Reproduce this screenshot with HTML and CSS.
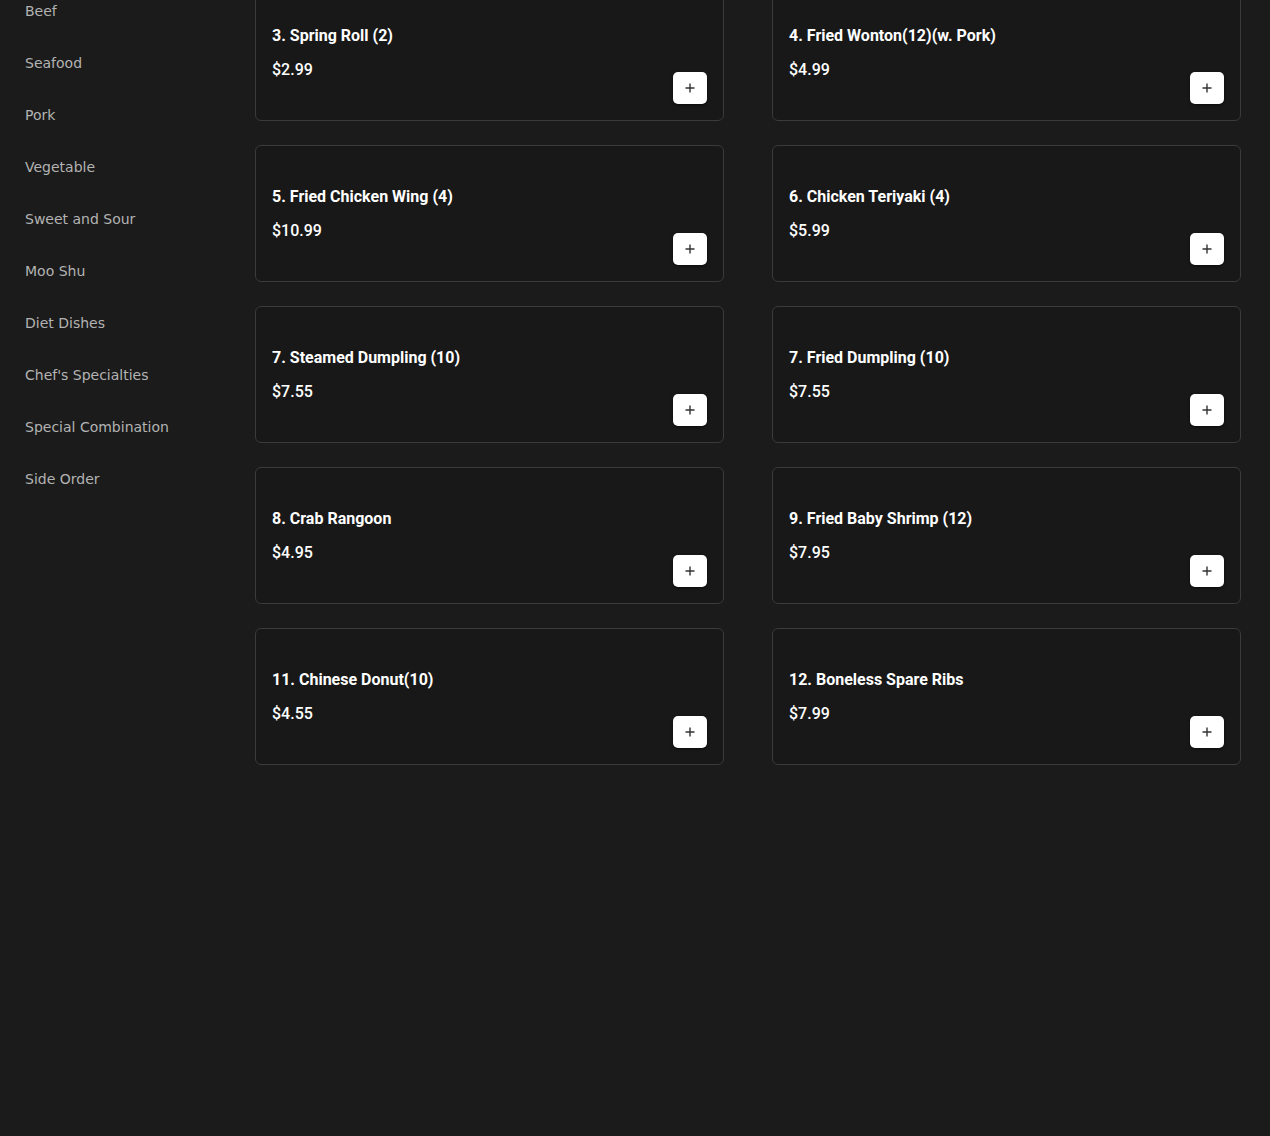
FILE: index.html
```html
<!DOCTYPE html>
<html>
<head>
<meta charset="utf-8">
<link rel="stylesheet" href="styles.css">
</head>
<body>
<div class="page">
  <nav class="sidebar">
    <a class="cat">Beef</a>
    <a class="cat">Seafood</a>
    <a class="cat">Pork</a>
    <a class="cat">Vegetable</a>
    <a class="cat">Sweet and Sour</a>
    <a class="cat">Moo Shu</a>
    <a class="cat">Diet Dishes</a>
    <a class="cat">Chef's Specialties</a>
    <a class="cat">Special Combination</a>
    <a class="cat">Side Order</a>
  </nav>
  <main class="menu">
    <div class="card"><div class="info"><div class="name">3. Spring Roll (2)</div><div class="price">$2.99</div></div><button class="add"><svg viewBox="0 0 10 10" width="10" height="10"><path d="M5 0.5v9M0.5 5h9" stroke="#333" stroke-width="1.4"/></svg></button></div>
    <div class="card"><div class="info"><div class="name">4. Fried Wonton(12)(w. Pork)</div><div class="price">$4.99</div></div><button class="add"><svg viewBox="0 0 10 10" width="10" height="10"><path d="M5 0.5v9M0.5 5h9" stroke="#333" stroke-width="1.4"/></svg></button></div>
    <div class="card"><div class="info"><div class="name">5. Fried Chicken Wing (4)</div><div class="price">$10.99</div></div><button class="add"><svg viewBox="0 0 10 10" width="10" height="10"><path d="M5 0.5v9M0.5 5h9" stroke="#333" stroke-width="1.4"/></svg></button></div>
    <div class="card"><div class="info"><div class="name">6. Chicken Teriyaki (4)</div><div class="price">$5.99</div></div><button class="add"><svg viewBox="0 0 10 10" width="10" height="10"><path d="M5 0.5v9M0.5 5h9" stroke="#333" stroke-width="1.4"/></svg></button></div>
    <div class="card"><div class="info"><div class="name">7. Steamed Dumpling (10)</div><div class="price">$7.55</div></div><button class="add"><svg viewBox="0 0 10 10" width="10" height="10"><path d="M5 0.5v9M0.5 5h9" stroke="#333" stroke-width="1.4"/></svg></button></div>
    <div class="card"><div class="info"><div class="name">7. Fried Dumpling (10)</div><div class="price">$7.55</div></div><button class="add"><svg viewBox="0 0 10 10" width="10" height="10"><path d="M5 0.5v9M0.5 5h9" stroke="#333" stroke-width="1.4"/></svg></button></div>
    <div class="card"><div class="info"><div class="name">8. Crab Rangoon</div><div class="price">$4.95</div></div><button class="add"><svg viewBox="0 0 10 10" width="10" height="10"><path d="M5 0.5v9M0.5 5h9" stroke="#333" stroke-width="1.4"/></svg></button></div>
    <div class="card"><div class="info"><div class="name">9. Fried Baby Shrimp (12)</div><div class="price">$7.95</div></div><button class="add"><svg viewBox="0 0 10 10" width="10" height="10"><path d="M5 0.5v9M0.5 5h9" stroke="#333" stroke-width="1.4"/></svg></button></div>
    <div class="card"><div class="info"><div class="name">11. Chinese Donut(10)</div><div class="price">$4.55</div></div><button class="add"><svg viewBox="0 0 10 10" width="10" height="10"><path d="M5 0.5v9M0.5 5h9" stroke="#333" stroke-width="1.4"/></svg></button></div>
    <div class="card"><div class="info"><div class="name">12. Boneless Spare Ribs</div><div class="price">$7.99</div></div><button class="add"><svg viewBox="0 0 10 10" width="10" height="10"><path d="M5 0.5v9M0.5 5h9" stroke="#333" stroke-width="1.4"/></svg></button></div>
  </main>
</div>
</body>
</html>
```

FILE: styles.css
```css
html, body {
  margin: 0;
  padding: 0;
  background: #1b1b1b;
  height: 100%;
  overflow: hidden;
}
.page {
  display: flex;
  align-items: flex-start;
}
.sidebar {
  width: 230px;
  flex: 0 0 230px;
  padding-left: 25px;
  box-sizing: border-box;
  display: flex;
  flex-direction: column;
  margin-top: -15px;
}
.cat {
  display: block;
  height: 52px;
  line-height: 52px;
  font-family: "DejaVu Sans", sans-serif;
  font-size: 14px;
  color: #b3b3b3;
  white-space: nowrap;
}
.menu {
  flex: 1;
  margin-top: -16px;
  padding-right: 29px;
  margin-left: 25px;
  display: grid;
  grid-template-columns: 1fr 1fr;
  column-gap: 48px;
  row-gap: 24px;
}
.card {
  box-sizing: border-box;
  height: 137px;
  border: 1px solid #3b3b3b;
  border-radius: 6px;
  background: #181818;
  padding: 16px;
  display: flex;
  justify-content: space-between;
  font-family: Roboto, "Liberation Sans", sans-serif;
  color: #fff;
}
.info {
  padding-top: 23px;
}
.name {
  font-size: 16px;
  font-weight: 700;
  line-height: 24px;
}
.price {
  margin-top: 10px;
  font-size: 16px;
  font-weight: 500;
  line-height: 24px;
}
.add {
  align-self: flex-end;
  width: 34px;
  height: 32px;
  padding: 0;
  border: none;
  border-radius: 5px;
  background: #fff;
  box-shadow: 0 1px 3px rgba(0,0,0,0.6);
  display: flex;
  align-items: center;
  justify-content: center;
}
.add svg { display: block; }
```
